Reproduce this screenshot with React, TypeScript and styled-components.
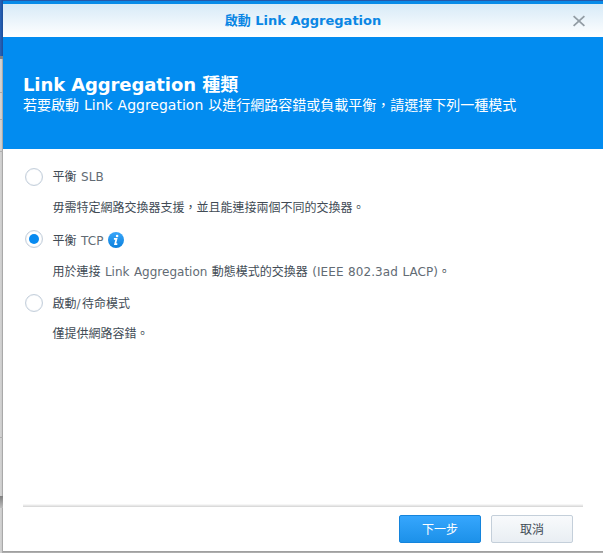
import React from "react";
import styled, { createGlobalStyle, css } from "styled-components";

const GlobalStyle = createGlobalStyle`
  * { box-sizing: border-box; }
  body { margin: 0; overflow: hidden; }
  #root { height: 553px; }
`;

const Desktop = styled.div`
  display: grid;
  grid-template-columns: 3px 600px;
  grid-template-rows: 1px 550px 2px;
  width: 603px;
  height: 553px;
  background: #a5a4a5;
  font-family: "DejaVu Sans", "Noto Sans CJK TC", sans-serif;
  color: #414b55;
`;

const TopEdge = styled.div`
  background: #2557a8;
`;

const BottomEdge = styled.div`
  grid-column: 2;
  background: linear-gradient(#999, #b4b4b4);
`;

const Backdrop = styled.div`
  grid-row: 1 / 4;
  display: flex;
  flex-direction: column;
  background: linear-gradient(90deg, #d4d4d4 0, #cacaca 66%, #a9a9a9 67%);
`;

const Slice = styled.div<{ $height: number; $fill?: string }>`
  height: ${(p) => p.$height}px;
  flex: none;
  background: ${(p) => p.$fill ?? "transparent"};
`;

const Dialog = styled.section`
  display: flex;
  flex-direction: column;
  background: #fff;
  border-top: 3px solid #088be8;
`;

const TitleBar = styled.header`
  display: grid;
  grid-template-columns: 40px 1fr 40px;
  align-items: center;
  height: 33px;
  flex: none;
  background: linear-gradient(#d7eaf7, #fff);
`;

const Title = styled.h1`
  grid-column: 2;
  margin: 0;
  text-align: center;
  font-size: 13px;
  line-height: 18px;
  font-weight: 700;
  color: #0a86e4;
  white-space: nowrap;
`;

const CloseButton = styled.button`
  display: grid;
  place-items: center;
  width: 32px;
  height: 32px;
  padding: 0;
  border: 0;
  background: none;
  color: #929ca4;
`;

const Banner = styled.div`
  height: 112px;
  flex: none;
  padding: 38px 20px 0;
  background: #028cf0;
  color: #fff;
`;

const Heading = styled.h2`
  margin: 0;
  font-size: 18px;
  line-height: 20px;
  font-weight: 700;
  white-space: nowrap;
`;

const Lead = styled.p`
  margin: 0;
  font-size: 14px;
  line-height: 21px;
  word-spacing: 0.5px;
  white-space: nowrap;
`;

const Latin = styled.span<{ $spacing?: number; $muted?: boolean }>`
  letter-spacing: ${(p) => p.$spacing ?? 0}px;
  ${(p) => p.$muted && css`color: #626b74;`}
`;

const Options = styled.div`
  flex: 1;
  padding: 17px 22px 0;
`;

const Option = styled.label<{ $height: number }>`
  display: grid;
  grid-template-columns: 18px 1fr;
  column-gap: 9.5px;
  align-content: start;
  height: ${(p) => p.$height}px;
  font-size: 12px;
  word-spacing: 0.6px;
  white-space: nowrap;
`;

const Radio = styled.span<{ $checked?: boolean }>`
  display: grid;
  place-items: center;
  width: 18px;
  height: 18px;
  margin-top: 2px;
  border: 1px solid #c5d0dc;
  border-radius: 50%;
  background: #fff;
  box-shadow: inset 0 0 1px #c5d0dc;

  &::after {
    content: "";
    width: 10px;
    height: 10px;
    border-radius: 50%;
    background: ${(p) => (p.$checked ? "#078af0" : "transparent")};
  }
`;

const OptionName = styled.span<{ $height?: number }>`
  height: ${(p) => p.$height ?? 22}px;
  line-height: ${(p) => p.$height ?? 22}px;
`;

const OptionText = styled.span<{ $gap?: number }>`
  grid-column: 2;
  margin-top: ${(p) => p.$gap ?? 9}px;
  height: 22px;
  line-height: 22px;
`;

const InfoIcon = styled.svg`
  display: inline-block;
  margin-left: 4.5px;
  vertical-align: -3px;
`;

const Footer = styled.footer`
  display: flex;
  justify-content: flex-end;
  gap: 10px;
  height: 47px;
  flex: none;
  margin: 0 20px;
  padding: 11px 10px 0 0;
  background: linear-gradient(#f6f6f6 0 1px, #e8e8e8 1px 2px, #dadada 2px 3px, transparent 3px);
`;

const Button = styled.button<{ $primary?: boolean }>`
  width: 82px;
  height: 28px;
  padding: 0 0 1px;
  border-radius: 2px;
  border: 1px solid #c4cfda;
  background: linear-gradient(#f8fafc, #e9eef3);
  color: #414b55;
  font: 12px "DejaVu Sans", "Noto Sans CJK TC", sans-serif;
  ${(p) =>
    p.$primary &&
    css`
      border-color: #1484dc;
      background: linear-gradient(#36a6fd, #1c91e9);
      color: #fff;
    `}
`;

function Info() {
  return (
    <InfoIcon width="16" height="16" viewBox="0 0 16 16" aria-label="info">
      <defs>
        <linearGradient id="info-fill" x1="0" y1="0" x2="0" y2="1">
          <stop offset="0" stopColor="#39a6fa" />
          <stop offset="1" stopColor="#0b80dc" />
        </linearGradient>
      </defs>
      <circle cx="8" cy="8" r="8" fill="url(#info-fill)" />
      <circle cx="9.1" cy="4" r="1.3" fill="#fff" />
      <path d="M5.9 6.8h2.6L7.1 12.2h2.2" fill="none" stroke="#fff" strokeWidth="1.7" />
    </InfoIcon>
  );
}

export default function App() {
  return (
    <>
      <GlobalStyle />
      <Desktop>
        <Backdrop>
          <Slice $height={56} $fill="linear-gradient(90deg, #2963b8, #1c4f9c)" />
          <Slice $height={3} $fill="#808488" />
          <Slice $height={33} />
          <Slice $height={1} $fill="#aaaaaa" />
          <Slice $height={26} />
          <Slice $height={1} $fill="#aaaaaa" />
          <Slice $height={31} />
          <Slice $height={1} $fill="#b0b0b0" />
          <Slice $height={285} />
          <Slice $height={1} $fill="#b0b0b0" />
          <Slice $height={58} />
          <Slice $height={12} $fill="linear-gradient(#7f7f7f, #bdbdbd)" />
        </Backdrop>
        <TopEdge />
        <Dialog>
          <TitleBar>
            <Title>
              啟動 <Latin>Link Aggregation</Latin>
            </Title>
            <CloseButton aria-label="close">
              <svg width="12" height="12" viewBox="0 0 12 12">
                <path d="M.6 1.2l10.8 9.6M11.4 1.2L.6 10.8" stroke="currentColor" strokeWidth="1.8" />
              </svg>
            </CloseButton>
          </TitleBar>
          <Banner>
            <Heading>
              <Latin $spacing={-0.1}>Link Aggregation</Latin> 種類
            </Heading>
            <Lead>
              若要啟動 <Latin>Link Aggregation</Latin> 以進行網路容錯或負載平衡，請選擇下列一種模式
            </Lead>
          </Banner>
          <Options>
            <Option $height={62}>
              <Radio />
              <OptionName>
                平衡 <Latin $muted $spacing={0.15}>SLB</Latin>
              </OptionName>
              <OptionText>毋需特定網路交換器支援，並且能連接兩個不同的交換器。</OptionText>
            </Option>
            <Option $height={64}>
              <Radio $checked />
              <OptionName $height={26}>
                平衡 <Latin $muted $spacing={0.15}>TCP</Latin>
                <Info />
              </OptionName>
              <OptionText $gap={7}>
                用於連接 <Latin $muted>Link Aggregation</Latin> 動態模式的交換器{" "}
                <Latin $spacing={0.08} $muted>(IEEE 802.3ad LACP)</Latin>。
              </OptionText>
            </Option>
            <Option $height={62}>
              <Radio />
              <OptionName $height={24}>
                啟動<Latin $spacing={1.5} $muted>/</Latin>待命模式
              </OptionName>
              <OptionText $gap={7}>僅提供網路容錯。</OptionText>
            </Option>
          </Options>
          <Footer>
            <Button $primary>下一步</Button>
            <Button>取消</Button>
          </Footer>
        </Dialog>
        <BottomEdge />
      </Desktop>
    </>
  );
}
